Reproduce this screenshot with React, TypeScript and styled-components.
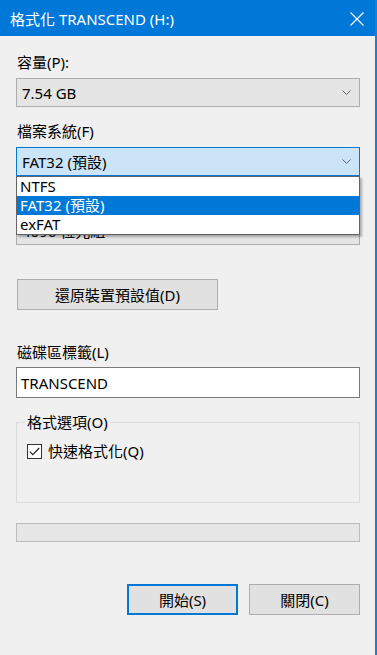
import React from "react";
import styled, { createGlobalStyle } from "styled-components";

const Global = createGlobalStyle`
  html, body { margin: 0; padding: 0; background: #f0f0f0; }
  body { font-family: "Noto Sans", "Noto Sans CJK TC", sans-serif; }
  * { box-sizing: border-box; }
`;

const Window = styled.div`
  width: 377px;
  height: 655px;
  background: #f0f0f0;
  border-right: 2px solid #1a80d6;
  display: flex;
  flex-direction: column;
  overflow: hidden;
  font-family: "Noto Sans", "Noto Sans CJK TC", sans-serif;
  font-size: 15px;
  color: #000;
`;

const TitleBar = styled.div`
  height: 36px;
  flex: none;
  background: #0078d7;
  color: #fff;
  display: flex;
  align-items: center;
  justify-content: space-between;
  padding: 0 13px 0 10px;
  margin-right: -2px;
  font-size: 15px;
`;

const TitleText = styled.span`
  line-height: 20px;
  padding-top: 1px;
`;

const CloseIcon = styled.svg`
  width: 14px;
  height: 14px;
  margin-top: 2px;
`;

const Content = styled.div`
  display: flex;
  flex-direction: column;
  padding: 0 15px 0 16px;
  flex: 1;
`;

const Label = styled.div<{ $top: number; $hidden?: boolean }>`
  margin-top: ${(p) => p.$top}px;
  height: 20px;
  line-height: 20px;
  padding-left: 1px;
  white-space: nowrap;
  visibility: ${(p) => (p.$hidden ? "hidden" : "visible")};
`;

const FieldWrap = styled.div`
  position: relative;
  margin-top: 6px;
`;

const SelectBox = styled.div<{ $active?: boolean }>`
  height: 29px;
  display: flex;
  align-items: center;
  justify-content: space-between;
  padding: 0 8px 0 5px;
  background: ${(p) => (p.$active ? "#cce4f7" : "#e5e5e5")};
  border: 1px solid ${(p) => (p.$active ? "#0078d7" : "#adadad")};
  line-height: 20px;
`;

const Chevron = styled.svg`
  width: 9px;
  height: 5px;
  flex: none;
`;

const DropList = styled.div`
  position: absolute;
  top: 100%;
  left: 0;
  width: 344px;
  background: #fff;
  border: 1px solid #646464;
  box-shadow: 2px 2px 2px rgba(0, 0, 0, 0.28);
  z-index: 5;
`;

const DropItem = styled.div<{ $selected?: boolean }>`
  height: 19px;
  line-height: 19px;
  padding-left: 3px;
  background: ${(p) => (p.$selected ? "#0078d7" : "transparent")};
  color: ${(p) => (p.$selected ? "#fff" : "#000")};
`;

const PushButton = styled.div<{ $width: number; $default?: boolean }>`
  width: ${(p) => p.$width}px;
  height: 31px;
  display: flex;
  align-items: center;
  justify-content: center;
  background: #e1e1e1;
  border: ${(p) => (p.$default ? "2px solid #0078d7" : "1px solid #adadad")};
  line-height: 20px;
`;

const RestoreRow = styled.div`
  margin-top: 34px;
  padding-left: 1px;
`;

const TextInput = styled.div`
  margin-top: 5px;
  height: 31px;
  background: #fff;
  border: 1px solid #7a7a7a;
  display: flex;
  align-items: center;
  padding-left: 4px;
  line-height: 20px;
`;

const GroupBox = styled.fieldset`
  margin: 14px 0 0 0;
  padding: 0 0 0 10px;
  height: 91px;
  border: 1px solid #dcdcdc;
  min-width: 0;
`;

const Legend = styled.legend`
  padding: 0 2px 0 2px;
  margin-left: -2px;
  line-height: 20px;
  font-size: 15px;
`;

const CheckRow = styled.div`
  display: flex;
  align-items: center;
  gap: 6px;
  margin-top: 9px;
  line-height: 20px;
`;

const CheckBox = styled.div`
  width: 15px;
  height: 15px;
  border: 1px solid #333;
  background: #fff;
  display: flex;
  align-items: center;
  justify-content: center;
`;

const Progress = styled.div`
  margin-top: 20px;
  height: 19px;
  background: #e6e6e6;
  border: 1px solid #bcbcbc;
`;

const ButtonRow = styled.div`
  margin-top: 42px;
  display: flex;
  justify-content: flex-end;
  gap: 11px;
`;

const ChevronIcon = () => (
  <Chevron viewBox="0 0 9 5">
    <path d="M0.5 0.5 L4.5 4.5 L8.5 0.5" fill="none" stroke="#606060" strokeWidth="1" />
  </Chevron>
);

export default function App() {
  return (
    <>
      <Global />
      <Window>
        <TitleBar>
          <TitleText>格式化 TRANSCEND (H:)</TitleText>
          <CloseIcon viewBox="0 0 14 14">
            <path d="M0.5 0.5 L13.5 13.5 M13.5 0.5 L0.5 13.5" stroke="#fff" strokeWidth="1.2" fill="none" />
          </CloseIcon>
        </TitleBar>
        <Content>
          <Label $top={16}>容量(P):</Label>
          <FieldWrap>
            <SelectBox>
              <span>7.54 GB</span>
              <ChevronIcon />
            </SelectBox>
          </FieldWrap>

          <Label $top={14}>檔案系統(F)</Label>
          <FieldWrap>
            <SelectBox $active>
              <span>FAT32 (預設)</span>
              <ChevronIcon />
            </SelectBox>
            <DropList>
              <DropItem>NTFS</DropItem>
              <DropItem $selected>FAT32 (預設)</DropItem>
              <DropItem>exFAT</DropItem>
            </DropList>
          </FieldWrap>

          <Label $top={14} $hidden>配置單位大小(A)</Label>
          <FieldWrap>
            <SelectBox>
              <span>4096 位元組</span>
              <ChevronIcon />
            </SelectBox>
          </FieldWrap>

          <RestoreRow>
            <PushButton $width={201}>還原裝置預設值(D)</PushButton>
          </RestoreRow>

          <Label $top={32}>磁碟區標籤(L)</Label>
          <TextInput>TRANSCEND</TextInput>

          <GroupBox>
            <Legend>格式選項(O)</Legend>
            <CheckRow>
              <CheckBox>
                <svg width="11" height="9" viewBox="0 0 11 9">
                  <path d="M0.8 4.6 L3.8 7.6 L10.2 1" fill="none" stroke="#222" strokeWidth="1.2" />
                </svg>
              </CheckBox>
              <span>快速格式化(Q)</span>
            </CheckRow>
          </GroupBox>

          <Progress />

          <ButtonRow>
            <PushButton $width={111} $default>開始(S)</PushButton>
            <PushButton $width={111}>關閉(C)</PushButton>
          </ButtonRow>
        </Content>
      </Window>
    </>
  );
}
